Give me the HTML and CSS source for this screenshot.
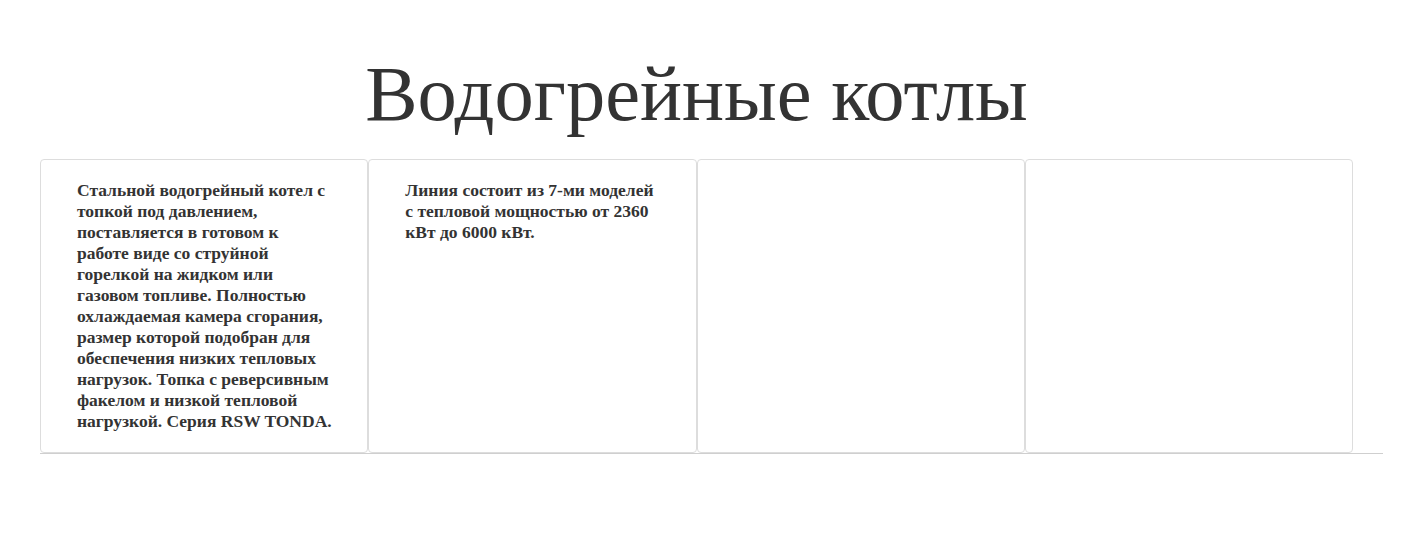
FILE: index.html
```html
<!DOCTYPE html>
<html lang="ru">
<head>
<meta charset="utf-8">
<title>Водогрейные котлы</title>
<link rel="stylesheet" href="styles.css">
</head>
<body>
<section class="section">
  <div class="inner">
    <h1 class="title">Водогрейные котлы</h1>
    <div class="cards">
      <div class="card">
        <p class="card-text">Стальной водогрейный котел с топкой под давлением, поставляется в готовом к работе виде со струйной горелкой на жидком или газовом топливе. Полностью охлаждаемая камера сгорания, размер которой подобран для обеспечения низких тепловых нагрузок. Топка с реверсивным факелом и низкой тепловой нагрузкой. Серия RSW TONDA.</p>
      </div>
      <div class="card">
        <p class="card-text">Линия состоит из 7-ми моделей с тепловой мощностью от 2360 кВт до 6000 кВт.</p>
      </div>
      <div class="card"></div>
      <div class="card"></div>
    </div>
  </div>
</section>
</body>
</html>
```

FILE: styles.css
```css
html, body {
  margin: 0;
  padding: 0;
  background: #fff;
}
body {
  font-family: "Liberation Serif", "Times New Roman", serif;
  color: #333;
}
.section {
  margin-left: 40px;
  width: 1343px;
  border-bottom: 1px solid #cfcfcf;
}
.inner {
  width: 1313px;
}
.title {
  margin: 0;
  padding-top: 51px;
  padding-bottom: 22px;
  font-size: 78.5px;
  line-height: 86px;
  font-weight: normal;
  text-align: center;
  color: #333;
}
.cards {
  display: grid;
  grid-template-columns: repeat(4, 1fr);
}
.card {
  border: 1px solid #ddd;
  border-radius: 4px;
  padding: 20px 34px 20px 36px;
  min-height: 252px;
}
.card-text {
  margin: 0;
  font-size: 17.5px;
  line-height: 21px;
  font-weight: bold;
  color: #333;
}
```
